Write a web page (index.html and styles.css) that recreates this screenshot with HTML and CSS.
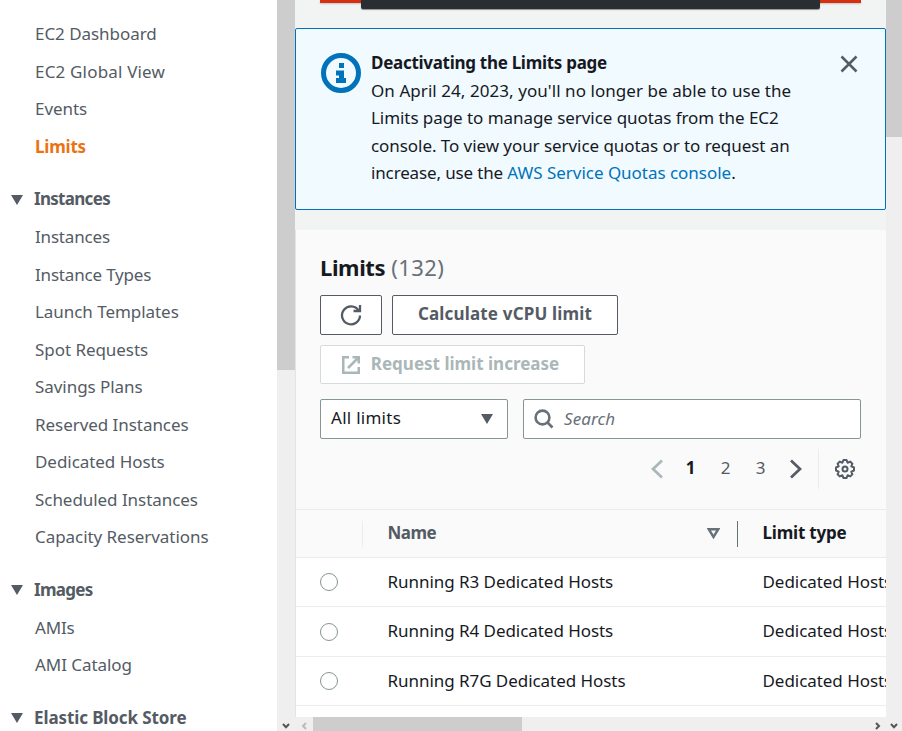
FILE: index.html
```html
<!DOCTYPE html>
<html lang="en">
<head>
<meta charset="utf-8">
<title>Limits | EC2</title>
<link rel="stylesheet" href="styles.css">
</head>
<body>
<div class="app">
  <nav class="sidebar">
    <a class="link">EC2 Dashboard</a>
    <a class="link wide">EC2 Global View</a>
    <a class="link">Events</a>
    <a class="link active">Limits</a>
    <h3 class="group"><svg class="caret" viewBox="0 0 12 10"><path d="M0 0H12L6 10Z"/></svg><span class="tight">Instances</span></h3>
    <a class="link tight-link">Instances</a>
    <a class="link tight-link">Instance Types</a>
    <a class="link">Launch Templates</a>
    <a class="link">Spot Requests</a>
    <a class="link">Savings Plans</a>
    <a class="link">Reserved Instances</a>
    <a class="link">Dedicated Hosts</a>
    <a class="link">Scheduled Instances</a>
    <a class="link">Capacity Reservations</a>
    <h3 class="group lower"><svg class="caret" viewBox="0 0 12 10"><path d="M0 0H12L6 10Z"/></svg><span class="tight">Images</span></h3>
    <a class="link tight-link">AMIs</a>
    <a class="link">AMI Catalog</a>
    <h3 class="group lower"><svg class="caret" viewBox="0 0 12 10"><path d="M0 0H12L6 10Z"/></svg><span>Elastic Block Store</span></h3>
  </nav>
  <div class="scroll-y side-scroll">
    <div class="thumb"></div>
    <svg class="arrow" viewBox="0 0 8 6"><path d="M1 1L4 4.2L7 1"/></svg>
  </div>
  <main class="content">
    <div class="flash"><div class="flash-inner"></div></div>
    <section class="alert">
      <svg class="info" viewBox="0 0 40 40"><circle cx="20" cy="20" r="17.5" fill="none" stroke="#0073bb" stroke-width="5"/><path fill="#0073bb" d="M18 10h5v5h-5zM15 17.500h8v7.500h2v5H15v-5h3v-2.500h-3z"/></svg>
      <div class="alert-text">
        <strong>Deactivating the Limits page</strong>
        <p>On April 24, 2023, you'll no longer be able to use the<br><span class="l2">Limits page to manage service quotas from the EC2</span><br><span class="l2">console. To view your service quotas or to request an</span><br><span class="l3">increase, use the <a>AWS Service Quotas console</a>.</span></p>
      </div>
      <svg class="close" viewBox="0 0 18 18"><path d="M1.500 1.500L16.500 16.500M16.500 1.500L1.500 16.500"/></svg>
    </section>
    <section class="panel">
      <header class="head">
        <h2><b>Limits</b> <span>(132)</span></h2>
        <div class="actions">
          <button class="btn refresh"><svg viewBox="0 0 22 22"><path d="M18.600 6.500A9 9 0 1 0 20 11.500M20 1V7H13.500"/></svg></button>
          <button class="btn calc"><span>Calculate vCPU limit</span></button>
          <button class="btn request"><svg viewBox="0 0 18 18"><path d="M7 1.250H1.250V16.750H16.750V11M10.500 1.250H16.750V7.500M16.500 1.500L6 12"/></svg><span>Request limit increase</span></button>
        </div>
        <div class="filters">
          <div class="select"><span>All limits</span><svg class="caret" viewBox="0 0 12 10"><path d="M0 0H12L6 10Z"/></svg></div>
          <div class="search"><svg viewBox="0 0 20 20"><circle cx="8.500" cy="8.500" r="6.900"/><path d="M13.500 13.500L18.500 18.500"/></svg><span>Search</span></div>
        </div>
        <div class="pager">
          <svg class="chev prev" viewBox="0 0 12 20"><path d="M11 1.500L2 10L11 18.500"/></svg>
          <span class="page current">1</span><span class="page">2</span><span class="page">3</span>
          <svg class="chev next" viewBox="0 0 12 20"><path d="M1 1.500L10 10L1 18.500"/></svg>
          <div class="settings"><svg viewBox="-10 -10 20 20"><path d="M-1.500 -9H1.500L2.600 -6.300L5.300 -7.400L7.400 -5.300L6.300 -2.600L9 -1.500V1.500L6.300 2.600L7.400 5.300L5.300 7.400L2.600 6.300L1.500 9H-1.500L-2.600 6.300L-5.300 7.400L-7.400 5.300L-6.300 2.600L-9 1.500V-1.500L-6.300 -2.600L-7.400 -5.300L-5.300 -7.400L-2.600 -6.300Z"/><circle r="2.500"/></svg></div>
        </div>
      </header>
      <div class="row thead">
        <div class="cell pick"></div>
        <div class="cell name"><span>Name</span><svg class="sort" viewBox="0 0 13 11"><path d="M1.700 1.250H11.300L6.500 9Z"/></svg></div>
        <div class="cell type"><span>Limit type</span></div>
      </div>
      <div class="row"><div class="cell pick"><i class="radio"></i></div><div class="cell name"><span>Running R3 Dedicated Hosts</span></div><div class="cell type"><span>Dedicated Hosts</span></div></div>
      <div class="row tall"><div class="cell pick"><i class="radio"></i></div><div class="cell name"><span>Running R4 Dedicated Hosts</span></div><div class="cell type"><span>Dedicated Hosts</span></div></div>
      <div class="row"><div class="cell pick"><i class="radio"></i></div><div class="cell name"><span>Running R7G Dedicated Hosts</span></div><div class="cell type"><span>Dedicated Hosts</span></div></div>
    </section>
    <div class="scroll-x">
      <svg class="harrow dim" viewBox="0 0 6 8"><path d="M5 1L2 4L5 7"/></svg>
      <div class="hthumb"></div>
      <svg class="harrow end" viewBox="0 0 6 8"><path d="M1 1L4 4L1 7"/></svg>
    </div>
  </main>
  <div class="scroll-y main-scroll">
    <div class="thumb"></div>
    <svg class="arrow" viewBox="0 0 8 6"><path d="M1 1L4 4.200L7 1"/></svg>
  </div>
</div>
</body>
</html>
```
FILE: styles.css
```css
* { box-sizing: border-box; }
body {
  margin: 0;
  font: 17px/27.5px "Noto Sans", "Open Sans", sans-serif;
  color: #16191f;
  letter-spacing: -0.05px;
}
svg { display: block; flex: none; }
h2, h3, p { margin: 0; }
.app { display: flex; height: 731px; overflow: hidden; background: #fff; }

.sidebar { width: 277px; flex: none; padding-top: 15px; color: #545b64; overflow: hidden; }
.link { display: block; height: 37.5px; line-height: 37.5px; padding-left: 35px; }
.wide { letter-spacing: 0.18px; }
.tight-link { letter-spacing: -0.18px; }
.active { color: #ec7211; font-weight: 700; letter-spacing: -0.2px; }
.group {
  display: flex; align-items: center; gap: 11px;
  height: 37.5px; margin-top: 15.5px; padding-left: 11px;
  font-size: 17px; font-weight: 700; letter-spacing: -0.1px;
}
.group span { margin-top: -2px; }
.group.lower span { margin-top: 0; }
.group .caret { margin-top: 1px; }
.tight { letter-spacing: -0.7px; }
.caret { width: 12px; height: 10px; fill: #545b64; }

.scroll-y { display: flex; flex-direction: column; justify-content: space-between; align-items: center; flex: none; background: #efefef; }
.scroll-y .thumb { width: 100%; background: #cdcdcd; }
.arrow { width: 8px; height: 6px; margin-bottom: 2px; }
.arrow path, .harrow path { fill: none; stroke: #555; stroke-width: 2; }
.side-scroll { width: 18px; }
.side-scroll .thumb { height: 370px; }
.main-scroll { width: 16px; }
.main-scroll .thumb { height: 137px; }

.content { width: 591px; flex: none; display: flex; flex-direction: column; background: #f2f3f3; overflow: hidden; }
.flash { height: 3px; margin: 0 25px 25px; background: #d5300f; box-shadow: 0 1px 2px #0003; }
.flash-inner { height: 9px; margin: 0 41px; background: #2a2e33; border-radius: 0 0 2px 2px; box-shadow: 0 1px 1px #0006; }

.alert {
  display: flex; height: 182px; flex: none; padding: 20px 27px 0 25px;
  background: #f1faff; border: 1px solid #0073bb; border-radius: 2px;
}
.info { width: 40px; height: 40px; margin-top: 4px; }
.alert-text { margin-left: 10px; flex: 1; white-space: nowrap; }
.alert-text strong { display: block; letter-spacing: -0.29px; }
.alert-text p { letter-spacing: 0.06px; }
.l2 { letter-spacing: -0.06px; }
.l3 { letter-spacing: -0.14px; }
.alert-text a { color: #0073bb; letter-spacing: -0.03px; }
.close { width: 18px; height: 18px; margin-top: 6px; fill: none; stroke: #545b64; stroke-width: 2.5; }

.panel { flex: none; height: 487px; margin-top: 20px; background: #fff; border-left: 1px solid #e2e5e5; }
.head { height: 280px; padding: 23px 24px 0; background: #fafafa; border-bottom: 1px solid #eaeded; }
h2 { font-size: 22px; line-height: 28px; font-weight: 400; color: #687078; letter-spacing: 0.4px; }
h2 b { color: #16191f; letter-spacing: -0.4px; }
.actions { display: flex; flex-wrap: wrap; gap: 10px; margin-top: 14px; }
.btn {
  display: flex; align-items: center; justify-content: center; height: 40px; padding: 0;
  border: 1px solid #545b64; border-radius: 2px; background: #fff; color: #545b64;
  font: inherit; font-weight: 700; white-space: nowrap; letter-spacing: 0;
}
.refresh { width: 62px; }
.refresh svg { width: 22px; height: 22px; fill: none; stroke: #545b64; stroke-width: 2.3; }
.calc { width: 226px; letter-spacing: 0.17px; }
.calc span { margin-top: -2px; }
.request { width: 265px; height: 39px; gap: 11px; padding-right: 4px; border-color: #d5dbdb; color: #aab7b8; }
.request span { margin-top: -2px; }
.request svg { width: 18px; height: 18px; fill: none; stroke: #aab7b8; stroke-width: 2.5; }
.filters { display: flex; gap: 15px; margin-top: 15px; }
.select, .search { display: flex; align-items: center; height: 40px; background: #fff; border: 1px solid #879596; border-radius: 2px; }
.select { width: 188px; justify-content: space-between; padding: 0 14px 0 10px; letter-spacing: 0.27px; }
.select span { margin-top: -2px; }
.search { width: 338px; padding-left: 10px; gap: 10px; color: #687078; font-style: italic; }
.search span { letter-spacing: 0.1px; }
.search svg { width: 20px; height: 20px; fill: none; stroke: #687078; stroke-width: 2.6; }
.pager { display: flex; align-items: center; justify-content: flex-end; height: 40px; margin-top: 10px; color: #545b64; }
.page { margin-top: -2px; width: 35px; text-align: center; }
.chev { width: 12px; height: 20px; fill: none; stroke: #545b64; stroke-width: 2.7; }
.prev { stroke: #aab7b8; margin-right: 10px; }
.next { margin-left: 12px; }
.current { color: #16191f; font-weight: 700; }
.settings { display: flex; align-items: center; justify-content: flex-end; width: 43px; height: 40px; margin-left: 16px; margin-right: 1px; padding-right: 6px; border-left: 1px solid #eaeded; }
.settings svg { width: 20px; height: 20px; fill: none; stroke: #545b64; stroke-width: 2; stroke-linejoin: round; }

.row { display: flex; height: 49px; border-bottom: 1px solid #eaeded; background: #fff; }
.tall { height: 50px; }
.tall .cell span { margin-top: -2px; }
.thead { height: 48px; align-items: center; background: #fafafa; font-weight: 700; color: #545b64; }
.cell { display: flex; align-items: center; flex: none; white-space: nowrap; letter-spacing: -0.05px; }
.pick { width: 67px; padding-left: 24px; }
.name { width: 375px; padding-left: 24.5px; }
.type { width: 148px; padding-left: 24.5px; overflow: hidden; }
.thead .cell { letter-spacing: -0.2px; }
.thead .name { letter-spacing: -0.55px; }
.thead .cell span { margin-top: -2px; }
.thead .pick { height: 26px; border-right: 1px solid #eaeded; }
.thead .name { height: 26px; justify-content: space-between; padding-right: 17.5px; border-right: 1px solid #687078; }
.thead .type { color: #16191f; }
.sort { width: 13px; height: 11px; fill: none; stroke: #687078; stroke-width: 2.4; }
.radio { width: 18px; height: 18px; border: 1px solid #879596; border-radius: 50%; background: #fff; }
.tall .radio { margin-top: 1px; }

.scroll-x { display: flex; align-items: center; flex: none; height: 14px; background: #efefef; }
.harrow { width: 6px; height: 8px; margin: 3px 6px 0; }
.dim path { stroke: #bbb; }
.hthumb { width: 209px; height: 14px; background: #cdcdcd; }
.end { margin-left: auto; margin-right: 5px; }
```
